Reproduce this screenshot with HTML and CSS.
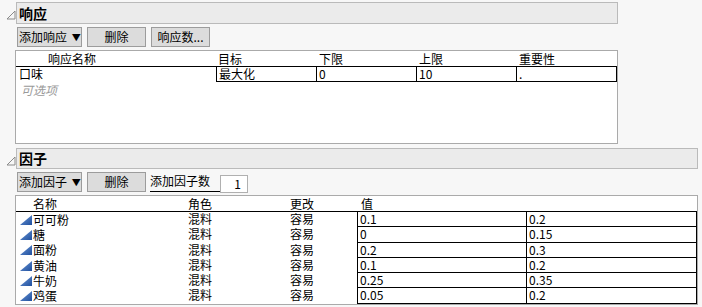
FILE: index.html
```html
<!DOCTYPE html>
<html lang="zh-CN">
<head>
    <meta charset="UTF-8">
    <title>响应与因子</title>
    <link rel="stylesheet" href="styles.css">
</head>
<body>
    <!-- 响应 -->
    <section class="panel panel-resp">
        <div class="panel-head">
            <svg class="fold" width="10" height="10" viewBox="0 0 10 10"><polygon points="1,9 9,1 9,9" fill="none" stroke="#8a8a8a" stroke-width="1"/></svg>
            <div class="panel-title">响应</div>
        </div>
        <div class="tools">
            <button class="btn btn-menu">添加响应 <span class="caret">▼</span></button>
            <button class="btn">删除</button>
            <button class="btn">响应数...</button>
        </div>
        <div class="box resp-box">
            <div class="resp-grid">
                <div class="th th-name">响应名称</div>
                <div class="th">目标</div>
                <div class="th">下限</div>
                <div class="th">上限</div>
                <div class="th">重要性</div>

                <div class="td td-name">口味</div>
                <div class="td cell first">最大化</div>
                <div class="td cell">0</div>
                <div class="td cell">10</div>
                <div class="td cell">.</div>
            </div>
            <div class="optional">可选项</div>
        </div>
    </section>

    <!-- 因子 -->
    <section class="panel panel-fact">
        <div class="panel-head">
            <svg class="fold" width="10" height="10" viewBox="0 0 10 10"><polygon points="1,9 9,1 9,9" fill="none" stroke="#8a8a8a" stroke-width="1"/></svg>
            <div class="panel-title">因子</div>
        </div>
        <div class="tools">
            <button class="btn btn-menu">添加因子 <span class="caret">▼</span></button>
            <button class="btn">删除</button>
            <span class="count-label">添加因子数</span>
            <span class="count-input">1</span>
        </div>
        <div class="box fact-box">
            <div class="fact-grid" id="fact-grid">
                <div class="th th-fname">名称</div>
                <div class="th">角色</div>
                <div class="th">更改</div>
                <div class="th th-val">值</div>
                <div class="th"></div>
            </div>
        </div>
    </section>

    <script>
        var factors = [
            ['可可粉', '0.1', '0.2'],
            ['糖', '0', '0.15'],
            ['面粉', '0.2', '0.3'],
            ['黄油', '0.1', '0.2'],
            ['牛奶', '0.25', '0.35'],
            ['鸡蛋', '0.05', '0.2']
        ];
        var icon = '<svg class="tri" width="12" height="10" viewBox="0 0 12 10">' +
            '<defs><linearGradient id="g" x1="0" y1="0" x2="1" y2="1">' +
            '<stop offset="0" stop-color="#6f9ad8"/><stop offset="1" stop-color="#1f4f9e"/></linearGradient></defs>' +
            '<polygon points="0,10 12,0 12,10" fill="url(#g)"/></svg>';
        var grid = document.getElementById('fact-grid');
        factors.forEach(function (f) {
            grid.insertAdjacentHTML('beforeend',
                '<div class="td td-fname">' + icon + '<span>' + f[0] + '</span></div>' +
                '<div class="td">混料</div>' +
                '<div class="td">容易</div>' +
                '<div class="td cell first">' + f[1] + '</div>' +
                '<div class="td cell">' + f[2] + '</div>');
        });
    </script>
</body>
</html>
```
FILE: styles.css
```css
body, html {
    margin: 0;
    padding: 0;
}

body {
    background: #f7f7f7;
    color: #000;
    font-family: "Noto Sans CJK SC", "Liberation Sans", sans-serif;
    font-size: 12px;
    line-height: 14px;
}

.panel {
    padding-left: 6px;
}

.panel-resp {
    width: 612px;
    padding-top: 2px;
}

.panel-fact {
    width: 692px;
    padding-top: 4px;
}

.panel-head {
    display: flex;
    align-items: center;
}

.fold {
    width: 10px;
    height: 10px;
    margin-top: 4px;
    flex: none;
}

.panel-title {
    flex: 1;
    height: 20px;
    line-height: 20px;
    background: #ebebeb;
    border: 1px solid #bababa;
    padding-left: 2px;
    font-size: 14px;
    font-weight: bold;
}

.panel-fact .panel-title {
    height: 19px;
    line-height: 19px;
}

.tools {
    display: flex;
    align-items: center;
    gap: 5px;
    margin: 3px 0 0 11px;
    height: 20px;
}

.btn {
    height: 20px;
    width: 59px;
    padding: 0;
    background: #dcdcdc;
    border: 1px solid #9c9c9c;
    font-family: inherit;
    font-size: 12px;
    color: #000;
    line-height: 16px;
}

.btn-menu {
    width: 65px;
    text-align: left;
    padding-left: 1px;
}

.caret {
    font-size: 9px;
    margin-left: 2px;
    vertical-align: 1px;
}

.count-label {
    margin-left: -1px;
    height: 19px;
    line-height: 18px;
    border-bottom: 1px solid #000;
    padding-right: 10px;
}

.count-input {
    width: 20px;
    height: 16px;
    line-height: 16px;
    margin-left: -5px;
    margin-top: 3px;
    background: #fff;
    border: 1px solid #b0b0b0;
    text-align: right;
    padding-right: 6px;
    box-sizing: content-box;
}

.box {
    background: #fff;
    border: 1px solid #aaaaaa;
    margin-left: 9px;
}

.resp-box {
    margin-top: 3px;
    height: 92px;
}

.fact-box {
    margin-top: 3px;
    height: 108px;
}

.resp-grid {
    display: grid;
    grid-template-columns: 200px 101px 100px 100px 100px;
}

.fact-grid {
    display: grid;
    grid-template-columns: 170px 102px 69px 170px 170px;
    grid-template-rows: 16px;
    grid-auto-rows: 15.3px;
}

.th {
    height: 15px;
    line-height: 15px;
    border-bottom: 1px solid #000;
    padding-left: 2px;
}

.th-name {
    padding-left: 32px;
}

.th-fname {
    padding-left: 17px;
}

.th-val {
    padding-left: 4px;
}

.td {
    height: 14px;
    line-height: 14px;
    padding-left: 2px;
    white-space: nowrap;
}

.td-name {
    padding-left: 3px;
}

.td-fname {
    display: flex;
    align-items: center;
    padding-left: 4px;
}

.tri {
    flex: none;
    margin-right: 1px;
}

.cell {
    border-right: 1px solid #000;
    border-bottom: 1px solid #000;
}

.fact-grid .td {
    height: 15.3px;
    box-sizing: border-box;
    line-height: 14px;
}

.cell.first {
    border-left: 1px solid #000;
}

.optional {
    color: #9a9a9a;
    font-style: italic;
    padding: 1px 0 0 5px;
}
```
